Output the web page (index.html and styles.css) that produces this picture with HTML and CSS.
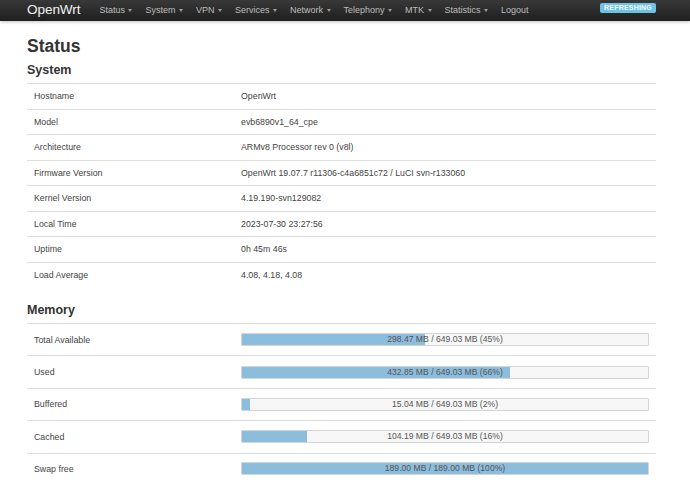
FILE: index.html
```html
<!DOCTYPE html>
<html>
<head>
<meta charset="utf-8">
<link rel="stylesheet" href="styles.css">
</head>
<body>
<header class="navbar">
  <a class="brand">OpenWrt</a>
  <ul class="nav">
    <li>Status <span class="caret"></span></li>
    <li>System <span class="caret"></span></li>
    <li>VPN <span class="caret"></span></li>
    <li>Services <span class="caret"></span></li>
    <li>Network <span class="caret"></span></li>
    <li>Telephony <span class="caret"></span></li>
    <li>MTK <span class="caret"></span></li>
    <li>Statistics <span class="caret"></span></li>
    <li>Logout</li>
  </ul>
  <span class="badge">REFRESHING</span>
</header>
<main class="container">
  <h2 class="title">Status</h2>
  <h3 class="section">System</h3>
  <table class="table sys">
    <tr><td class="key">Hostname</td><td>OpenWrt</td></tr>
    <tr><td class="key">Model</td><td>evb6890v1_64_cpe</td></tr>
    <tr><td class="key">Architecture</td><td>ARMv8 Processor rev 0 (v8l)</td></tr>
    <tr><td class="key">Firmware Version</td><td>OpenWrt 19.07.7 r11306-c4a6851c72 / LuCI svn-r133060</td></tr>
    <tr><td class="key">Kernel Version</td><td>4.19.190-svn129082</td></tr>
    <tr><td class="key">Local Time</td><td>2023-07-30 23:27:56</td></tr>
    <tr><td class="key">Uptime</td><td>0h 45m 46s</td></tr>
    <tr><td class="key">Load Average</td><td>4.08, 4.18, 4.08</td></tr>
  </table>
  <h3 class="section mem">Memory</h3>
  <table class="table memtable">
    <tr><td class="key">Total Available</td><td><div class="bar"><div class="fill" style="width:45%"></div><span class="label">298.47 MB / 649.03 MB (45%)</span></div></td></tr>
    <tr><td class="key">Used</td><td><div class="bar"><div class="fill" style="width:66%"></div><span class="label">432.85 MB / 649.03 MB (66%)</span></div></td></tr>
    <tr><td class="key">Buffered</td><td><div class="bar"><div class="fill" style="width:2%"></div><span class="label">15.04 MB / 649.03 MB (2%)</span></div></td></tr>
    <tr><td class="key">Cached</td><td><div class="bar"><div class="fill" style="width:16%"></div><span class="label">104.19 MB / 649.03 MB (16%)</span></div></td></tr>
    <tr><td class="key">Swap free</td><td><div class="bar"><div class="fill" style="width:100%"></div><span class="label">189.00 MB / 189.00 MB (100%)</span></div></td></tr>
  </table>
</main>
</body>
</html>
```
FILE: styles.css
```css
html, body {
  margin: 0;
  padding: 0;
  background: #fff;
  font-family: "Liberation Sans", Arial, sans-serif;
  color: #404040;
}

.navbar {
  height: 21px;
  display: flex;
  align-items: center;
  background: linear-gradient(to bottom, #383838, #1f1f1f);
  box-shadow: 0 1px 3px rgba(0, 0, 0, 0.25);
  padding-left: 27px;
  position: relative;
}

.brand {
  font-size: 13.6px;
  color: #f2f2f2;
  margin-right: 19px;
  letter-spacing: -0.1px;
  line-height: 16px;
  margin-top: -1px;
}

.nav {
  list-style: none;
  margin: 0;
  padding: 0;
  display: flex;
  gap: 13px;
  font-size: 9px;
  color: #bdbdbd;
  margin-top: -2px;
}

.nav li {
  white-space: nowrap;
}

.caret {
  display: inline-block;
  width: 0;
  height: 0;
  border-left: 2.5px solid transparent;
  border-right: 2.5px solid transparent;
  border-top: 3px solid #9a9a9a;
  vertical-align: middle;
  margin-left: 1px;
}

.badge {
  position: absolute;
  left: 600px;
  top: 3px;
  width: 56px;
  height: 10px;
  box-sizing: border-box;
  background: #6ec3e3;
  border-radius: 2px;
  color: #f4fbff;
  font-size: 7px;
  font-weight: bold;
  line-height: 10px;
  text-align: center;
  letter-spacing: 0.2px;
}

.container {
  margin: 0 34px 0 27px;
}

.title {
  font-size: 17.5px;
  font-weight: bold;
  margin: 0;
  padding-top: 16px;
  line-height: 19px;
  color: #333;
}

.section {
  font-size: 12.5px;
  font-weight: bold;
  margin: 0;
  padding-top: 7px;
  line-height: 15px;
  color: #333;
  padding-bottom: 5px;
}

.section.mem {
  padding-top: 16px;
  padding-bottom: 5px;
}

.table {
  width: 100%;
  border-collapse: collapse;
  font-size: 8.8px;
  color: #444;
}

.table td {
  border-top: 1px solid #dedede;
  padding: 0 7px;
  vertical-align: middle;
}

.table .key {
  width: 193px;
}

.sys td {
  height: 24.5px;
}

.memtable td {
  height: 31.4px;
}

.memtable tr:last-child td {
  height: 30px;
}

.bar {
  position: relative;
  height: 13px;
  background: #f7f7f7;
  border: 1px solid #d4d4d4;
  box-sizing: border-box;
  border-radius: 1px;
  overflow: hidden;
}

.fill {
  height: 100%;
  background: #8dbddd;
}

.label {
  position: absolute;
  left: 0;
  right: 0;
  top: 0;
  line-height: 11px;
  text-align: center;
  font-size: 8.6px;
  color: #555;
}
```
